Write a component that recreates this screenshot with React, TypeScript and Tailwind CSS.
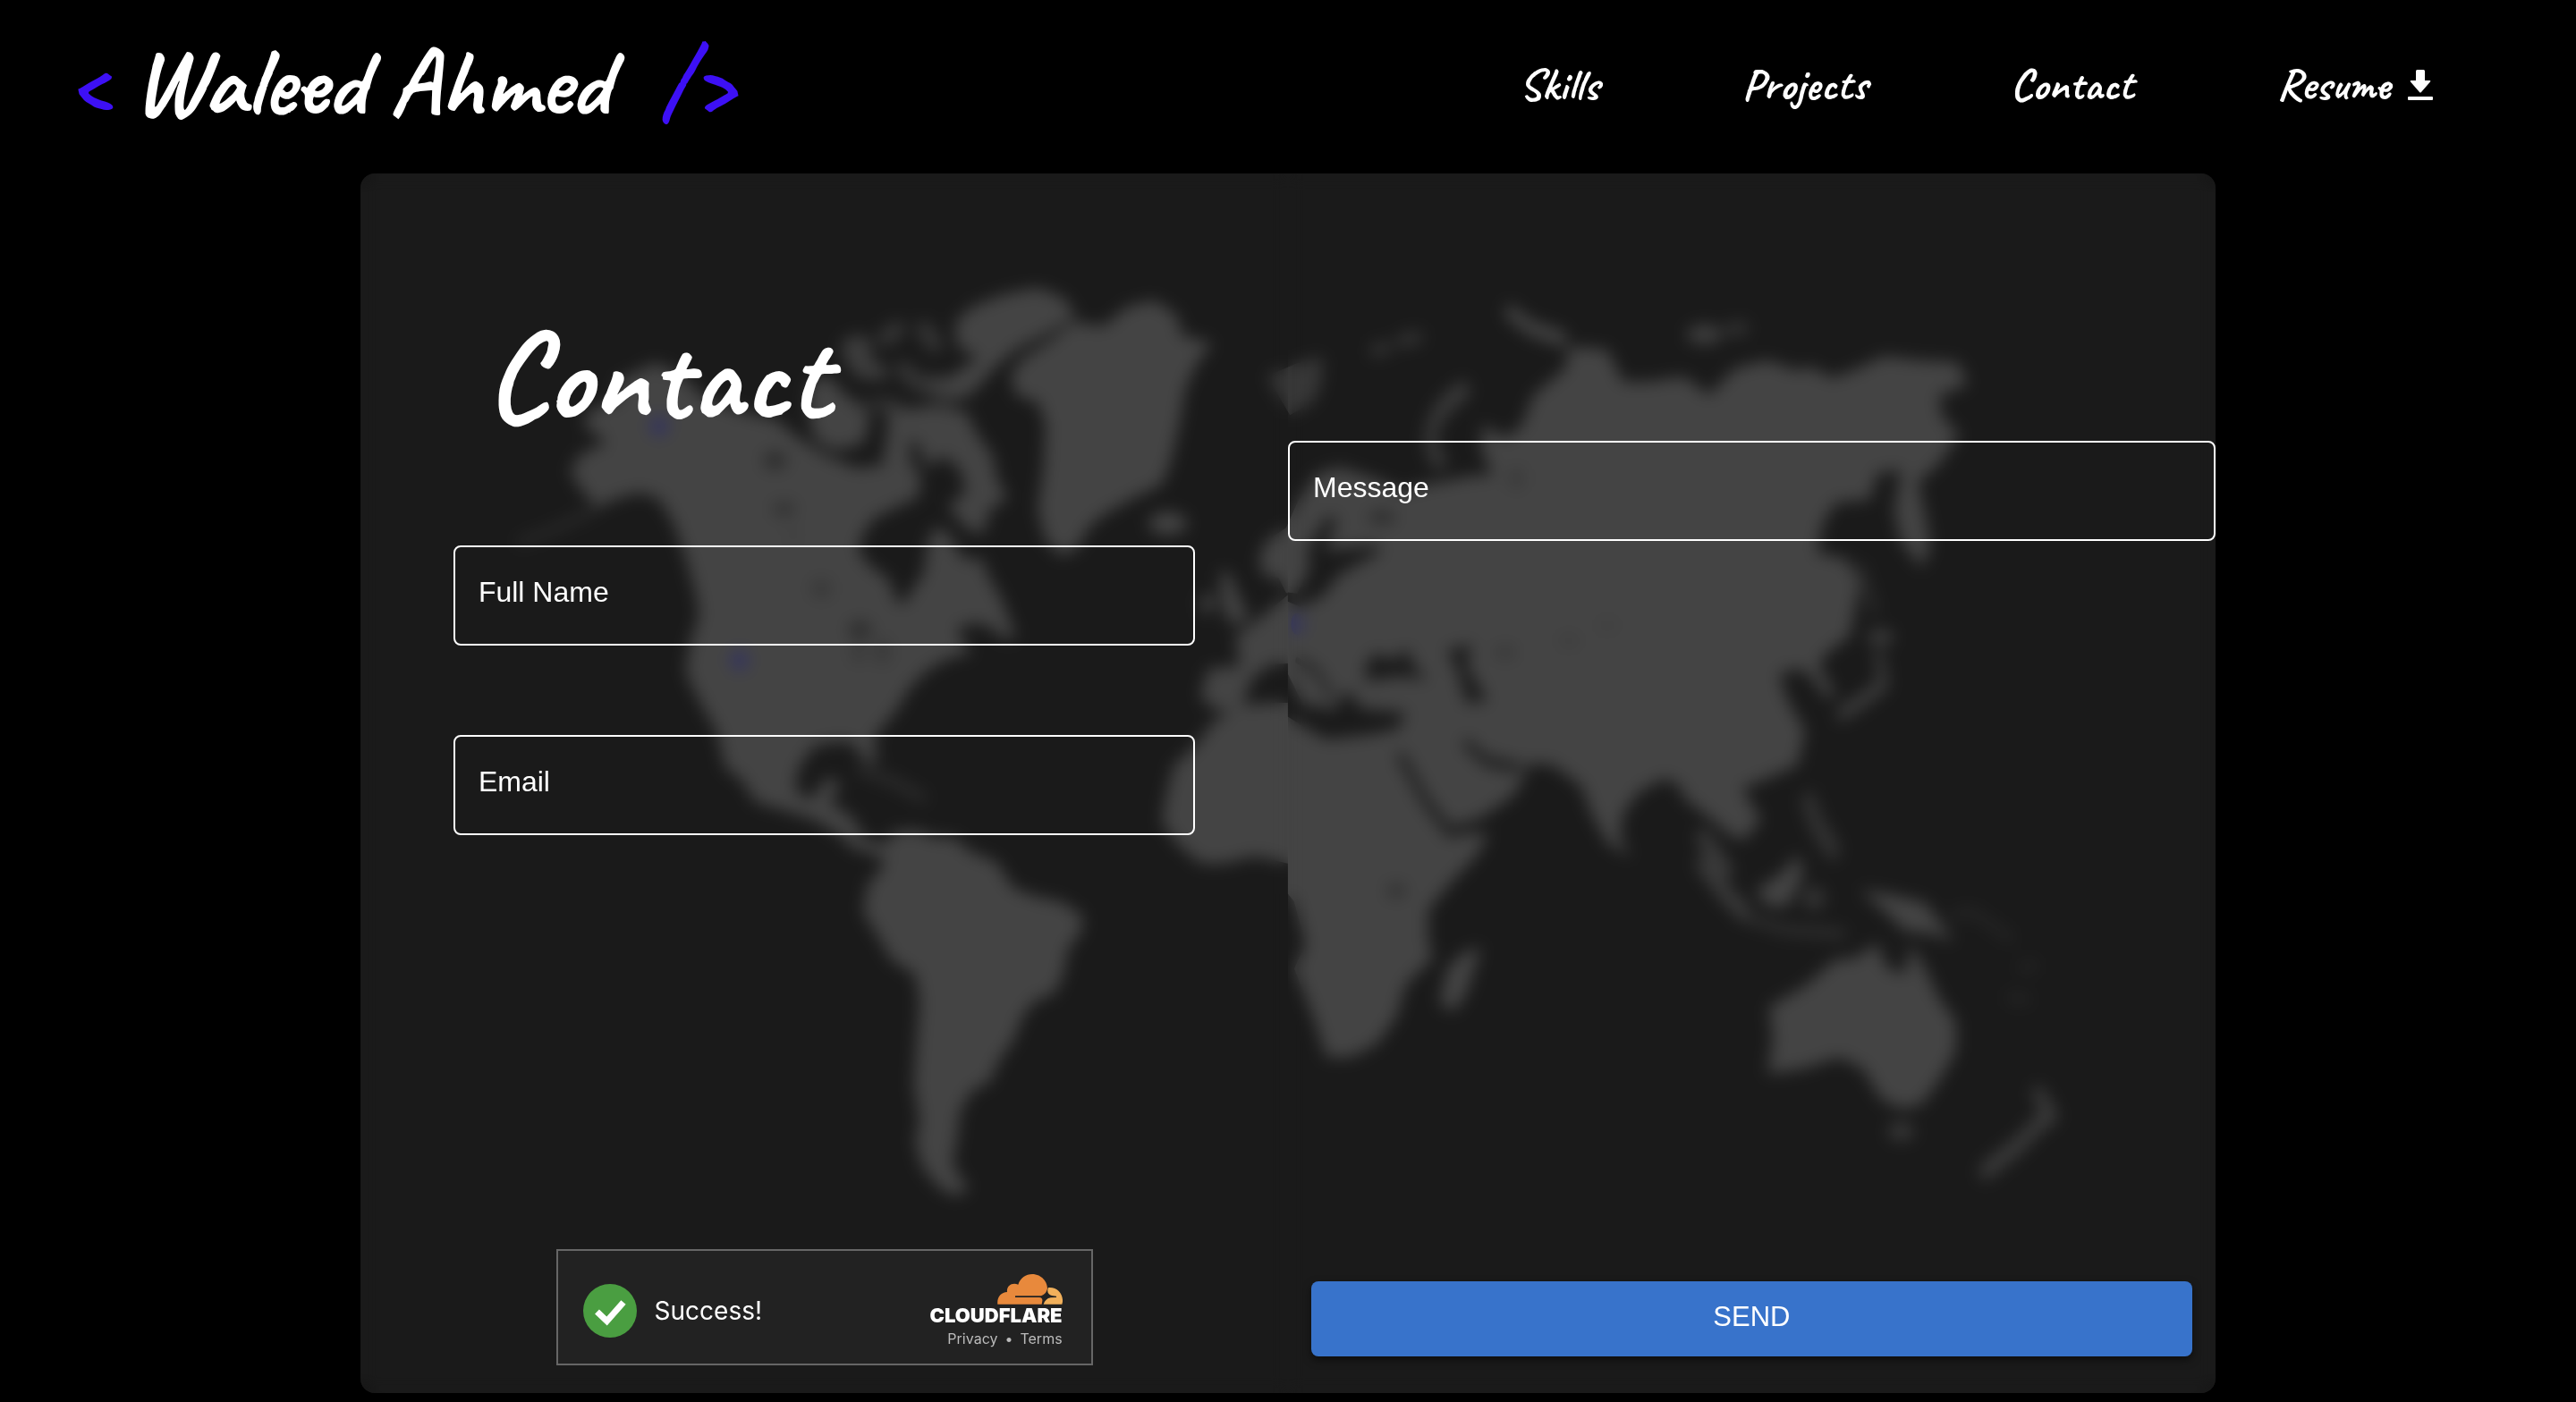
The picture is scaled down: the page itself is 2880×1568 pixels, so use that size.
import React from "react";

const LAND = "#444444";
const SEA = "#1a1a1a";

function WorldMap() {
  return (
    <svg
      className="absolute inset-0 h-full w-full"
      viewBox="403 194 2074 1364"
      preserveAspectRatio="none"
      aria-hidden="true"
      fill={LAND}
      strokeLinejoin="round"
      strokeLinecap="round"
    >
      {/* Alaska, western North America, Mexico */}
      <g transform="translate(390 180) scale(0.4337 0.4847)">
        <path d="M640 800 600 760 570 715 600 675 665 650 605 610 620 575 700 550 690 510 790 465 860 495 920 550 1020 580 1100 595 1160 640 1230 680 1290 700 1290 800 1310 1150 1450 1190 1400 1280 1350 1325 1365 1385 1335 1390 1290 1335 1200 1350 1160 1400 1150 1450 1190 1475 1235 1420 1270 1440 1240 1480 1300 1515 1330 1568 1290 1568 1200 1520 1130 1500 1050 1480 1010 1425 970 1400 950 1320 900 1240 868 1180 880 1110 903 1050 895 1000 870 920 840 840 800 780 750 765 690 780z" />
        <path d="M635 805 530 850 440 880" fill="none" stroke={LAND} strokeWidth="12" opacity="0.6" />
        <path d="M1320 1405 1400 1430 1480 1470" fill="none" stroke={LAND} strokeWidth="20" opacity="0.5" />
        <circle cx="800" cy="612" r="24" fill="#34345e" />
        <circle cx="1007" cy="1152" r="24" fill="#34345e" />
      </g>

      {/* Eastern Canada and the Arctic islands */}
      <g transform="translate(760 310) scale(0.3333)">
        <path d="M380 520 430 590 520 625 600 640 680 630 700 480 770 490 775 620 810 670 800 740 730 770 650 810 610 870 600 920 640 970 700 1010 730 1090 755 1095 780 1050 820 990 830 900 850 845 890 845 930 910 960 950 1010 940 1040 1010 1080 1080 1110 1160 1130 1210 1080 1210 1040 1170 980 1160 930 1180 950 1220 980 1260 900 1280 830 1320 770 1380 730 1450 680 1510 640 1560 380 1560z" />
        <path d="M440 350 500 330 540 380 600 430 640 480 620 560 520 585 450 540 430 430z" />
        <path d="M680 430 740 450 850 430 960 450 1000 530 1050 600 1065 680 1100 740 1040 780 1020 860 970 850 900 770 960 720 940 640 880 600 830 640 800 560 720 510z" />
        <path d="M600 440 700 420 790 470" fill="none" stroke={LAND} strokeWidth="40" opacity="0.5" />
        <path d="M925 150 980 100 1080 60 1200 35 1290 70 1330 130 1240 185 1130 240 1060 300 1000 370 950 410 850 370 830 330 900 340 1000 270 930 230z" />
        <path d="M540 220 600 190 645 220 640 270 700 310 690 345 600 340 560 290z" opacity="0.85" />
        <path d="M690 205 730 175M820 175 855 225M750 310 800 355 900 400" fill="none" stroke={LAND} strokeWidth="56" opacity="0.65" />
        <g fill={SEA}>
          <ellipse cx="320" cy="615" rx="38" ry="30" opacity="0.6" />
          <ellipse cx="350" cy="778" rx="38" ry="24" opacity="0.45" />
          <ellipse cx="475" cy="1045" rx="32" ry="32" opacity="0.3" />
          <ellipse cx="605" cy="1182" rx="38" ry="28" opacity="0.6" />
          <ellipse cx="600" cy="1260" rx="20" ry="36" opacity="0.3" />
          <ellipse cx="680" cy="1255" rx="24" ry="44" opacity="0.3" />
          <path d="M440 560 500 600 620 620 700 545 660 460 630 500 615 560 520 580z" opacity="0.7" />
          <ellipse cx="380" cy="865" rx="20" ry="20" opacity="0.15" />
        </g>
      </g>

      {/* Central and South America */}
      <g transform="translate(900 880) scale(0.3333)">
        <path d="M-80 20 0 60 70 85 130 120 160 180 260 215" fill="none" stroke={LAND} strokeWidth="44" />
        <path d="M270 190 300 150 380 145 430 170 500 170 560 220 640 250 680 310 700 340 780 370 860 385 930 430 930 480 880 550 870 620 840 690 770 720 730 770 700 850 650 920 620 990 560 1020 520 1090 510 1190 495 1260 520 1310 550 1345 510 1375 450 1345 390 1270 370 1190 385 1120 365 1000 375 850 385 720 370 630 290 580 250 510 195 420 210 330 260 270z" />
      </g>

      {/* Greenland, Iceland, British Isles, western Europe and West Africa */}
      <g transform="translate(1000 280) scale(0.4337 0.4847)">
        <path d="M315 335 300 290 330 250 400 210 460 165 540 175 600 130 670 115 730 150 740 195 820 215 780 260 750 320 735 400 715 480 690 540 620 570 540 610 500 640 470 690 430 705 390 670 370 600 385 500 390 400 370 350z" />
        <ellipse cx="705" cy="630" rx="50" ry="26" />
        <path d="M840 740 865 745 885 790 915 850 870 865 845 820zM790 800 820 790 825 830 795 840z" />
        <path d="M960 290 1040 260 1105 245 1100 310 1080 350 1020 380z" opacity="0.7" />
        <path d="M1015 795 940 850 880 890 890 960 810 965 788 1030 830 1062 870 1060 820 1090 780 1140 720 1190 700 1260 690 1320 730 1370 790 1415 850 1415 930 1398 1015 1415 1030 1500 1060 1600 1240 1600 1240 795z" />
        <path d="M940 710 960 670 1010 640 1040 580 1090 515 1150 500 1250 530 1320 560 1320 690 1130 740 1110 720 1085 760 1060 800 1010 790 990 755 950 750z" />
      </g>

      {/* Russia west of the Lena, Middle East, India and Africa */}
      <g transform="translate(1440 280) scale(0.3571 0.5995)">
        <path d="M100 430 150 408 220 425 260 450 330 460 400 440 500 430 580 420 640 420 605 370 610 325 680 350 730 330 770 270 870 220 880 180 1000 185 1050 245 1130 245 1240 235 1320 270 1400 220 1500 205 1600 225 1600 780 1540 790 1568 870 1600 960 1480 990 1420 1000 1480 1060 1430 1100 1380 1090 1300 1040 1230 1000 1180 985 1100 1010 1050 1050 1040 1095 1075 1132 1000 1105 950 1050 920 1000 830 960 750 958 735 990 700 1020 600 1060 510 1087 630 1088 590 1130 510 1180 440 1230 440 1290 455 1320 370 1370 340 1430 280 1480 200 1505 120 1505 80 1430 20 1340 60 1290 20 1215 0 1200 0 560z" />
        <path d="M605 1300 560 1385 520 1420 475 1405 500 1340 550 1310z" />
        <path d="M550 262C470 290 410 350 475 392" fill="none" stroke={LAND} strokeWidth="38" opacity="0.75" />
        <path d="M695 115 760 145 860 165" fill="none" stroke={LAND} strokeWidth="28" />
        <ellipse cx="1305" cy="157" rx="55" ry="18" opacity="0.9" />
        <path d="M1380 148 1430 145M270 187 310 182M350 170 410 162" stroke={LAND} strokeWidth="24" opacity="0.6" />
        <g fill={SEA} stroke="none">
          <path d="M70 590 60 560 120 498 155 500 115 560 280 550 290 562 160 605 110 645 40 665 0 655 0 638 30 640z" />
          <ellipse cx="295" cy="498" rx="42" ry="12" opacity="0.6" />
          <ellipse cx="715" cy="425" rx="26" ry="20" opacity="0.25" />
          <path d="M240 780 270 752 335 765 370 742 400 780 440 800 340 795 250 803z" />
          <path d="M500 745 575 735 560 775 625 840 560 845 535 790z" />
          <path d="M0 790 50 850 100 850 140 860 190 820 230 855 370 862 345 893 260 903 120 912 40 885 0 870z" />
          <path d="M30 765 90 785 140 835" fill="none" stroke={SEA} strokeWidth="12" />
          <ellipse cx="680" cy="750" rx="32" ry="12" opacity="0.3" />
          <ellipse cx="880" cy="728" rx="30" ry="9" opacity="0.2" />
          <ellipse cx="1000" cy="700" rx="30" ry="8" opacity="0.15" />
          <path d="M1265 630 1310 590" stroke={SEA} strokeWidth="24" opacity="0.4" />
          <ellipse cx="340" cy="1195" rx="30" ry="14" opacity="0.45" />
          <path d="M355 945 430 1025 505 1085 620 1068" fill="none" stroke={SEA} strokeWidth="20" />
          <path d="M560 920 620 953 720 965" fill="none" stroke={SEA} strokeWidth="18" />
        </g>
        <circle cx="30" cy="697" r="20" fill="#34345e" />
      </g>
      <path d="M1390 789 1399 760 1421 743 1440 742 1440 786 1416 786z" fill={SEA} />

      {/* East Asia, Indonesia, Australia and New Zealand */}
      <g transform="translate(1900 320) scale(0.3827 0.6633)">
        <path d="M-50 180 30 185 110 140 190 130 270 150 320 135 390 155 460 140 540 118 640 125 755 128 785 165 700 185 710 220 760 250 700 300 640 330 665 400 675 440 650 475 590 430 570 380 590 310 520 315 500 360 400 365 360 400 345 450 430 460 470 500 440 590 370 620 350 640 400 690 370 695 330 660 280 640 230 650 260 700 310 750 290 800 200 830 110 850 180 900 130 935 60 910 -50 860z" />
        <ellipse cx="530" cy="592" rx="38" ry="14" opacity="0.8" />
        <path d="M525 625 540 670 480 697 415 722" fill="none" stroke={LAND} strokeWidth="24" opacity="0.85" />
        <path d="M470 475 510 545" fill="none" stroke={LAND} strokeWidth="20" opacity="0.5" />
        <path d="M320 870 345 910 390 950" fill="none" stroke={LAND} strokeWidth="38" opacity="0.6" />
        <path d="M10 930 80 985M10 975 70 1020 130 1055" fill="none" stroke={LAND} strokeWidth="32" opacity="0.8" />
        <path d="M140 1065 250 1085 420 1092" fill="none" stroke={LAND} strokeWidth="16" opacity="0.55" />
        <path d="M165 1020 240 990 290 958 305 990 260 1045 200 1045z" />
        <ellipse cx="335" cy="1032" rx="34" ry="20" opacity="0.6" />
        <path d="M470 1018 560 1026 660 1040 745 1105 680 1092 600 1087 550 1058z" />
        <path d="M740 1060 800 1055 910 1100M940 1150 980 1145M905 1200 960 1203" fill="none" stroke={LAND} strokeWidth="14" opacity="0.3" />
        <path d="M205 1215 310 1180 400 1135 450 1135 520 1108 550 1150 600 1160 620 1110 660 1150 700 1200 750 1240 750 1290 700 1340 650 1380 590 1387 530 1370 480 1320 410 1300 300 1320 200 1328 215 1270z" />
        <ellipse cx="590" cy="1425" rx="38" ry="16" opacity="0.7" />
        <path d="M835 1493 930 1450 1000 1408 1030 1398 990 1362" fill="none" stroke={LAND} strokeWidth="30" opacity="0.8" />
      </g>
    </svg>
  );
}

const navItems = ["Skills", "Projects", "Contact"];
const script = "font-[Caveat,cursive]";

function Header() {
  return (
    <header className="flex items-center justify-between pt-9 pr-40 pb-12 pl-19 text-white">
      <a
        href="#home"
        className={`${script} flex items-center gap-6 text-[108px] leading-[110px] font-bold whitespace-nowrap`}
      >
        <span className="text-[#3d10f5]">&lt;</span>
        <span>Waleed Ahmed</span>
        <span className="pl-8 text-[#3d10f5]">/&gt;</span>
      </a>
      <nav className={`${script} flex items-center gap-[160px] pt-2 text-[50px] leading-[48px] font-semibold`}>
        {navItems.map((item) => (
          <a key={item} href={`#${item.toLowerCase()}`}>
            {item}
          </a>
        ))}
        <a href="#resume" className="flex items-center gap-5">
          Resume
          <svg viewBox="0 0 28 34" className="h-[34px] w-7" fill="currentColor" aria-hidden="true">
            <path d="M9 1.5Q9 0 10.500 0H17.500Q19 0 19 1.500V12H24.500Q26 12 25 13.500L15 25Q14 26 13 25L3 13.500Q2 12 3.500 12H9z" />
            <rect x="0" y="30" width="28" height="4" rx="1" />
          </svg>
        </a>
      </nav>
    </header>
  );
}

const boxStyle =
  "block h-28 w-full resize-none rounded-lg border-2 border-white bg-transparent px-7 py-8 text-[32px] leading-[40px] text-white outline-none";
const labelStyle = "pointer-events-none absolute top-8 left-7 text-[32px] leading-[40px] text-white";

function TextField({ id, label, type }: { id: string; label: string; type: string }) {
  return (
    <div className="relative">
      <input id={id} type={type} className={boxStyle} />
      <label htmlFor={id} className={labelStyle}>
        {label}
      </label>
    </div>
  );
}

function Turnstile() {
  return (
    <div className="flex h-[130px] w-[600px] items-center justify-between self-center border-2 border-[#666666] bg-[#222222] pt-2 pr-8 pl-7 font-[Inter,sans-serif]">
      <div className="flex items-center gap-5 text-[28px] leading-9 text-white">
        <svg viewBox="0 0 60 60" className="size-[60px]" aria-hidden="true">
          <circle cx="30" cy="30" r="30" fill="#4a9e41" />
          <path d="M15.500 31 26.500 41.500 45 20.500" fill="none" stroke="#fff" strokeWidth="7" />
        </svg>
        Success!
      </div>
      <div className="flex flex-col items-end">
        <svg viewBox="345 47 219 102" className="h-[34px] w-[73px]" aria-hidden="true">
          <path
            fill="#e8893c"
            d="M346 148C343 124 358 108 378 107 375 86 395 73 415 82 422 60 441 47 462 47 491 47 513 70 513 96 510 108 504 116 492 120H405V125H486C494 125 497 130 496 137L494 148z"
          />
          <path
            fill="#f1b05b"
            d="M516 92C546 89 566 112 564 140L562 148H500C504 136 512 128 524 126L543 125V121L528 119C516 115 510 106 516 92z"
          />
        </svg>
        <span className="text-[22px] leading-6 font-black text-white">CLOUDFLARE</span>
        <div className="flex items-center gap-2 pt-1 text-[16px] leading-5 text-[#bbbbbb]">
          <a href="#privacy">Privacy</a>
          <span>•</span>
          <a href="#terms">Terms</a>
        </div>
      </div>
    </div>
  );
}

export default function App() {
  return (
    <div className="min-h-screen bg-black pb-[10px] font-['Liberation_Sans',Arial,sans-serif]">
      <Header />
      <main className="relative mx-auto w-[72%] overflow-hidden rounded-2xl bg-[#1a1a1a]">
        <WorldMap />
        <form className="grid grid-cols-2">
          <div className="flex flex-col px-[10%] pt-[168px] pb-[31px] backdrop-blur-[9px]">
            <h1 className={`${script} ml-9 text-[140px] leading-[120px] font-bold text-white`}>Contact</h1>
            <div className="mt-[128px] flex flex-col gap-[100px]">
              <TextField id="name" label="Full Name" type="text" />
              <TextField id="email" label="Email" type="email" />
            </div>
            <div className="mt-[463px] flex flex-col">
              <Turnstile />
            </div>
          </div>
          <div className="flex flex-col pt-[299px] pb-[41px] backdrop-blur-[9px]">
            <div className="relative">
              <textarea id="message" rows={1} className={boxStyle} />
              <label htmlFor="message" className={labelStyle}>
                Message
              </label>
            </div>
            <button
              type="submit"
              className="mx-[26px] mt-auto h-[84px] rounded-lg bg-[#3873cb] pb-1 text-[31px] text-white shadow-[0_4px_10px_rgba(0,0,0,0.5)]"
            >
              SEND
            </button>
          </div>
        </form>
      </main>
    </div>
  );
}
